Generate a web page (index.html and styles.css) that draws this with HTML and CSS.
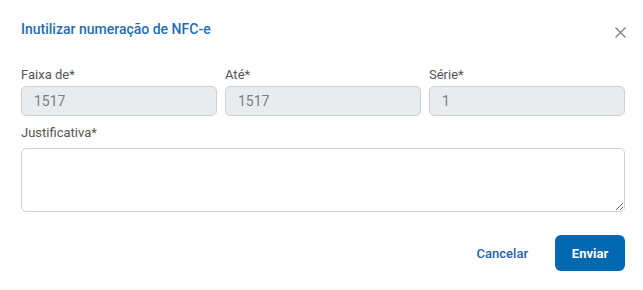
FILE: index.html
```html
<!DOCTYPE html>
<html>
<head>
    <title>Inutilizar numeração de NFC-e</title>
    <link rel="stylesheet" href="styles.css">
</head>
<body>

<div class="dialog">
    <div class="dialog-header">
        <h2 class="dialog-title">Inutilizar numeração de NFC-e</h2>
        <button class="close-btn" aria-label="Fechar">
            <svg width="11" height="11" viewBox="0 0 11 11">
                <path d="M0.5 0.5 L10.5 10.5 M10.5 0.5 L0.5 10.5" stroke="#7a7a7a" stroke-width="1.1" fill="none"/>
            </svg>
        </button>
    </div>

    <div class="form-row">
        <div class="field">
            <label>Faixa de*</label>
            <input type="text" value="1517" disabled>
        </div>
        <div class="field">
            <label>Até*</label>
            <input type="text" value="1517" disabled>
        </div>
        <div class="field">
            <label>Série*</label>
            <input type="text" value="1" disabled>
        </div>
    </div>

    <div class="field field-full">
        <label>Justificativa*</label>
        <textarea></textarea>
    </div>

    <div class="dialog-actions">
        <button class="btn-link">Cancelar</button>
        <button class="btn-primary">Enviar</button>
    </div>
</div>

</body>
</html>
```

FILE: styles.css
```css
* { margin: 0; padding: 0; box-sizing: border-box; }
body {
    font-family: Roboto, "Liberation Sans", Arial, sans-serif;
    background: #fff;
    color: #444;
}

/* Dialog container */
.dialog {
    padding: 18px 18px 0 21px;
}

.dialog-header {
    display: flex;
    justify-content: space-between;
    align-items: flex-start;
    height: 20px;
}

.dialog-title {
    font-size: 14px;
    line-height: 20px;
    font-weight: 500;
    color: #1f6db3;
    padding-top: 1px;
}

.close-btn {
    background: none;
    border: none;
    cursor: pointer;
    margin-top: 9px;
    margin-right: -1px;
    width: 11px;
    height: 11px;
    display: flex;
}

/* Form fields */
.form-row {
    display: grid;
    grid-template-columns: repeat(3, 1fr);
    gap: 8px;
    margin-top: 28px;
}

.field label {
    display: block;
    font-size: 13px;
    line-height: 18px;
    color: #555;
    margin-bottom: 2px;
}

.field input {
    width: 100%;
    height: 30px;
    padding: 0 12px;
    border: 1px solid #cdd1d5;
    border-radius: 5px;
    background: #e9ecef;
    font-family: inherit;
    font-size: 14px;
    color: #7d7d7d;
}

.field-full {
    margin-top: 8px;
}

.field-full label {
    margin-bottom: 6px;
}

.field textarea {
    display: block;
    width: 100%;
    height: 64px;
    border: 1px solid #cdd1d5;
    border-radius: 5px;
    padding: 8px 12px;
    font-family: inherit;
    font-size: 14px;
    background: #fff;
}

/* Footer buttons */
.dialog-actions {
    display: flex;
    justify-content: flex-end;
    align-items: center;
    gap: 13px;
    margin-top: 23px;
}

.btn-link {
    background: none;
    border: none;
    padding: 0 14px;
    height: 36px;
    font-family: inherit;
    font-size: 13px;
    font-weight: 500;
    color: #1f62a8;
    cursor: pointer;
}

.btn-primary {
    width: 70px;
    height: 36px;
    border: none;
    border-radius: 6px;
    background: #0068b1;
    color: #fff;
    font-family: inherit;
    font-size: 13px;
    font-weight: 700;
    cursor: pointer;
}
```
